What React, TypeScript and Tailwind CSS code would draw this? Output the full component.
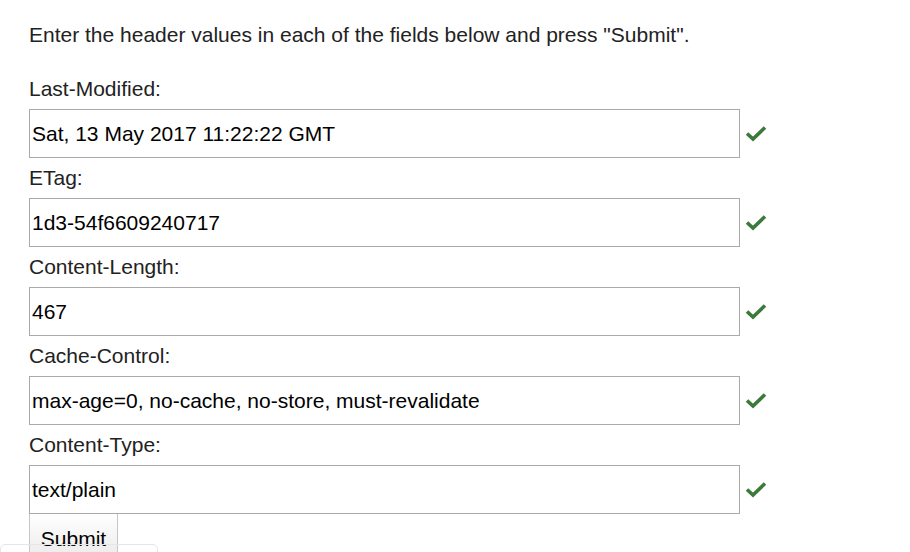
import React from "react";

const fields: [string, string][] = [
  ["Last-Modified:", "Sat, 13 May 2017 11:22:22 GMT"],
  ["ETag:", "1d3-54f6609240717"],
  ["Content-Length:", "467"],
  ["Cache-Control:", "max-age=0, no-cache, no-store, must-revalidate"],
  ["Content-Type:", "text/plain"],
];

function Check() {
  return (
    <svg width="22" height="17" viewBox="0 0 22 17" className="ml-[5px]">
      <path d="M2 8.5 L8 14 L20 2.5" fill="none" stroke="#3b7a3b" strokeWidth="3.6" strokeLinecap="butt" strokeLinejoin="miter" />
    </svg>
  );
}

export default function App() {
  return (
    <div className="relative h-[552px] w-[910px] overflow-hidden bg-white pl-[29px] text-[21px] text-[#222] [font-family:'Liberation_Sans',Arial,sans-serif]">
      <div className="flex h-[30px] items-center mt-[20px]">Enter the header values in each of the fields below and press "Submit".</div>
      <div className="h-[19px]" />
      {fields.map(([label, value]) => (
        <div key={label}>
          <div className="flex h-[40px] items-center">{label}</div>
          <div className="flex items-center">
            <div className="flex h-[49px] w-[711px] items-center border border-[#a9a9a9] pl-[2px] text-black">{value}</div>
            <Check />
          </div>
        </div>
      ))}
      <div className="h-[40px] w-[89px] border border-t-0 border-[#c6c6c6] bg-gradient-to-b from-white to-[#ededed] pt-[9px] text-center text-black">Submit</div>
      <div className="absolute left-0 top-[544px] h-[20px] w-[158px] rounded-t-[5px] border border-[#e6e6e6]" />
    </div>
  );
}
